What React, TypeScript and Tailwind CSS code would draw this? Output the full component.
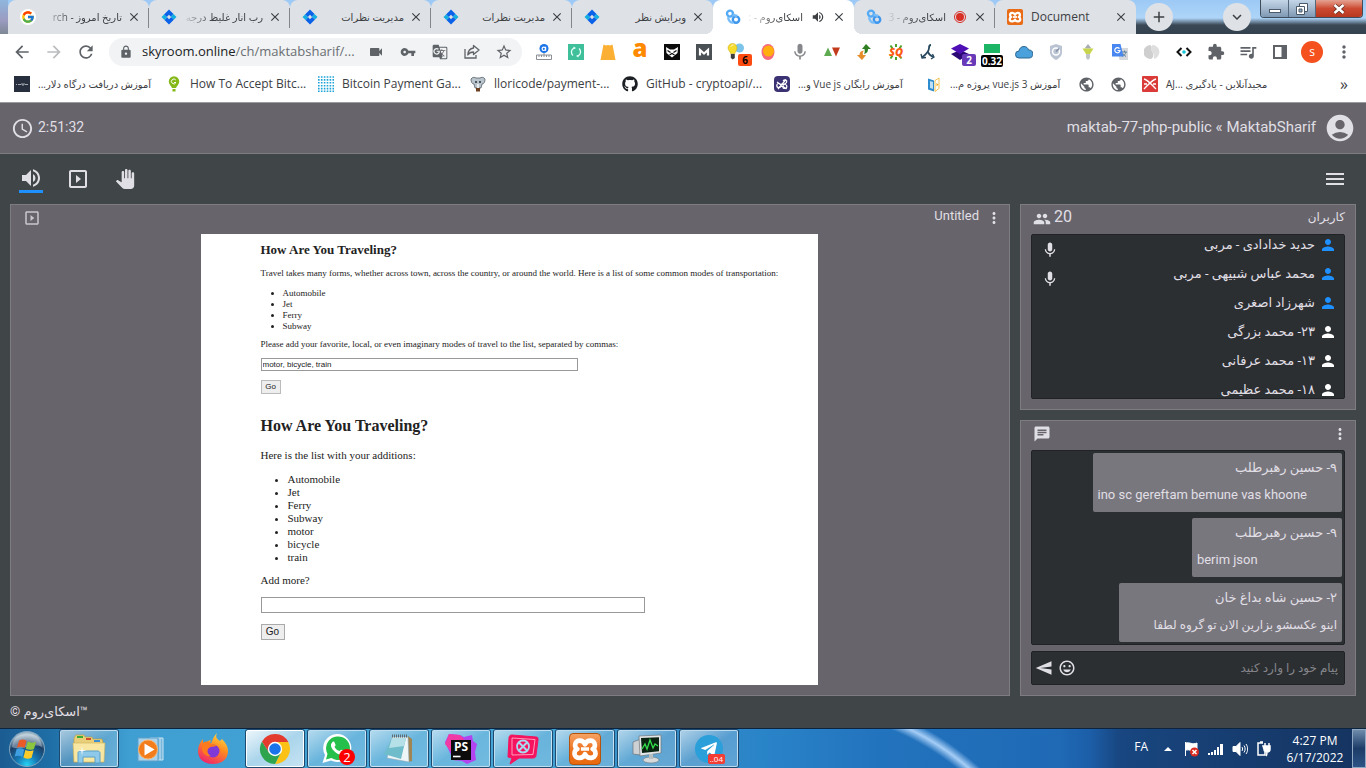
import type { ReactNode } from 'react';
import {
  MdAccountCircle, MdArrowBack, MdArrowForward, MdChat, MdClose, MdExtension, MdGTranslate, MdGroup,
  MdKeyboardArrowDown, MdLock, MdMenu, MdMoreVert, MdOutlineMood, MdOutlineSlideshow,
  MdPerson, MdPublic, MdQueueMusic, MdRefresh, MdSchedule, MdSend, MdStarBorder, MdVideocam, MdVolumeUp,
  MdVpnKey, MdAdd,
} from 'react-icons/md';
import { FaGithub, FaTelegramPlane } from 'react-icons/fa';
import { FcGoogle } from 'react-icons/fc';

/* ---------- small drawings ---------- */

const DiamondIcon = () => (
  <svg viewBox="0 0 16 16" className="size-4">
    <path d="M8 .5 12.500 5 9.800 7.700 8 5.800 5.800 8 3 5.400Z" fill="#0b62e8" />
    <path d="M8 15.500 3.500 11 6.200 8.300 8 10.200 10.200 8 13 10.600Z" fill="#0b62e8" />
    <path d="M3 5.400.5 8l3 3 2.700-2.700L5.800 8Z" fill="#12aee0" />
    <path d="M13 10.600 15.500 8l-3-3-2.700 2.700.4.3Z" fill="#12aee0" />
  </svg>
);

const SkyroomIcon = () => (
  <svg viewBox="0 0 16 16" className="size-4" fill="none" strokeWidth="2.400">
    <circle cx="5" cy="4.600" r="3" stroke="#54aaf5" />
    <circle cx="11" cy="10.600" r="3.200" stroke="#3e97ef" />
    <path d="M3 8.200C4 13 6 14 8.600 13.600M7.600 5.600 12 7" stroke="#78bdf8" />
  </svg>
);

const XamppTile = ({ big = false }: { big?: boolean }) => (
  <span
    className={
      big
        ? 'grid size-8 place-items-center rounded-sm border border-[#b4530c] bg-linear-to-b from-[#f5a263] via-[#ee7420] to-[#e8690f]'
        : 'grid size-4 place-items-center rounded-xs bg-[#e96b16]'
    }
  >
    <svg viewBox="4 6 24 21" className={big ? 'size-7' : 'size-3.5'} fill="none" stroke="#fff" strokeWidth="4" strokeLinejoin="round">
      <path d="M16 12.500C14 8 7.500 8.500 7.500 13c0 2 1 3 2 3.500-1.500.5-2.500 2-2.500 4 0 4.500 7 5 9 .5 2 4.500 9 4 9-.5 0-2-1-3.500-2.500-4 1-.5 2-1.500 2-3.500 0-4.500-6.500-5-8.500-.5Z" />
      <path d="M12.500 16.500h7" strokeWidth="3" />
    </svg>
  </span>
);

const MicIcon = ({ className }: { className: string }) => (
  <svg viewBox="0 0 24 24" className={className} fill="currentColor">
    <path d="M12 14c1.660 0 2.990-1.340 2.990-3L15 5c0-1.660-1.340-3-3-3S9 3.340 9 5v6c0 1.660 1.340 3 3 3zm5.300-3c0 3-2.540 5.100-5.300 5.100S6.700 14 6.700 11H5c0 3.410 2.720 6.230 6 6.720V21h2v-3.280c3.280-.48 6-3.300 6-6.720h-1.700z" />
  </svg>
);

const HandIcon = () => (
  <svg viewBox="0 0 24 24" className="size-5" fill="currentColor">
    <path d="M23 5.500V20c0 2.200-1.800 4-4 4h-7.300c-1.080 0-2.100-.43-2.850-1.190L1 14.830s1.260-1.230 1.300-1.250c.22-.19.49-.29.79-.29.22 0 .42.060.6.160.040.010 4.310 2.460 4.310 2.460V4c0-.83.67-1.500 1.500-1.500S11 3.170 11 4v7h1V1.500c0-.83.67-1.500 1.500-1.500S15 .67 15 1.500V11h1V2.500c0-.83.67-1.500 1.500-1.500s1.500.67 1.500 1.500V11h1V5.500c0-.83.67-1.500 1.500-1.500s1.500.67 1.500 1.500z" />
  </svg>
);

const ShareIcon = () => (
  <svg viewBox="0 0 16 16" className="size-4" fill="none" stroke="#5f6368" strokeWidth="1.300">
    <path d="M1 5v9h11v-3" />
    <path d="M9.500 1.500 15 6l-5.500 4.500V8C7 8 5 9 3.800 11 4 7 6 4.500 9.500 4Z" strokeLinejoin="round" />
  </svg>
);

const RulerIcon = () => (
  <svg viewBox="0 0 16 16" className="size-4">
    <circle cx="8" cy="4.500" r="4.500" fill="#1a73e8" />
    <circle cx="7.800" cy="4.800" r="1.700" fill="none" stroke="#fff" strokeWidth="1.200" />
    <path d="M9.600 2.800v4" stroke="#fff" strokeWidth="1.200" />
    <path d="M8 9v2M.5 11h15v4.500H.5ZM3 11v2M5.500 11v2M8 11v2M10.500 11v2M13 11v2" fill="none" stroke="#8a8f96" />
  </svg>
);

const ShieldIcon = () => (
  <svg viewBox="0 0 16 16" className="size-4">
    <path d="M8 0 14 2v6c0 4-3 6.500-6 8-3-1.500-6-4-6-8V2Z" fill="#b9c3d2" />
    <circle cx="8" cy="7.500" r="3.500" fill="none" stroke="#fff" strokeWidth="1.500" />
    <path d="M8 7.500 11 4.500" stroke="#7f8da3" strokeWidth="1.500" />
  </svg>
);

const Bulbs = () => (
  <svg viewBox="0 0 18 18" className="size-[18px]">
    <circle cx="12.500" cy="5" r="4.500" fill="#7cc4ea" />
    <path d="M1 5a4.500 4.500 0 0 1 9 0c0 2.500-2 3.500-2 5.500H3.500C3.500 8.500 1 7.500 1 5Z" fill="#f6dc2b" stroke="#c7a90e" strokeWidth=".5" />
    <path d="M3.800 11h4v4l-2 1.500-2-1.500Z" fill="#3c3c3c" />
    <path d="M4 3.500c.5-1 1.300-1.600 2.400-1.500" stroke="#fff" fill="none" />
  </svg>
);

const TranslateIcon = () => (
  <svg viewBox="0 0 16 16" className="size-4">
    <path d="M5 4h11v12H7.500Z" fill="#d5d8dc" />
    <path d="M10 8h5M12.500 6.500V8M14 8c-.5 2-2 3.500-3.500 4.500M11 9.500c.6 1.300 1.800 2.400 3 3" stroke="#5f7f9a" fill="none" />
    <path d="M0 0h8.500l3 12.500H0Z" fill="#4886f0" />
    <path d="M7.500 4.600A2.600 2.600 0 1 0 8 6.500H5.500" stroke="#fff" fill="none" strokeWidth="1.200" />
  </svg>
);

const Badge = ({ className, children }: { className: string; children: ReactNode }) => (
  <span className={`absolute rounded-xs px-1 text-[10px] leading-3 font-bold ${className}`}>{children}</span>
);

const extensions: { label: string; icon: ReactNode }[] = [
  { label: 'Ruler', icon: <RulerIcon /> },
  {
    label: 'Sync',
    icon: (
      <svg viewBox="0 0 16 16" className="size-4">
        <path d="M0 0h16v16H0Z" fill="#3fc09b" />
        <path d="M5 11.500A4.500 4.500 0 0 1 6 4M11 4.500A4.500 4.500 0 0 1 10 12" fill="none" stroke="#e9fff8" strokeWidth="1.300" />
        <path d="M5.500 2.500 8 4 5.500 5.500ZM10.500 10.500 8 12l2.500 1.500Z" fill="#e9fff8" />
      </svg>
    ),
  },
  {
    label: 'Bag',
    icon: (
      <svg viewBox="0 0 16 16" className="size-4">
        <path d="M3.500.5 6 1.500 8 1l2 .5 2.500-1L15.500 16H.5Z" fill="#fbb034" />
      </svg>
    ),
  },
  { label: 'Ahrefs', icon: <span className="pb-2 font-['Open_Sans',sans-serif] text-2xl leading-4 font-extrabold text-[#ff8a00]">a</span> },
  {
    label: 'Owl',
    icon: (
      <svg viewBox="0 0 16 16" className="size-4">
        <path d="M0 0h16v16H0Z" fill="#0b0b0b" />
        <path d="m2 3 4 2.500h4L14 3l-.5 6L8 13.500 2.500 9Z" fill="#fff" />
        <path d="m3.500 6.500 3 2M12.500 6.500l-3 2M5.500 11 8 9.500l2.500 1.500" stroke="#0b0b0b" strokeWidth="1.200" fill="none" />
      </svg>
    ),
  },
  {
    label: 'Moz',
    icon: (
      <svg viewBox="0 0 16 16" className="size-4">
        <path d="M0 0h16v16H0Z" fill="#4b5054" />
        <path d="M4 11.500V6l4 3.500L12 6v5.500" fill="none" stroke="#fff" strokeWidth="2.200" />
      </svg>
    ),
  },
  { label: 'Bulbs', icon: <><Bulbs /><Badge className="right-0 bottom-0 bg-[#ff4d12] text-black">6</Badge></> },
  {
    label: 'Sun',
    icon: (
      <svg viewBox="0 0 16 16" className="size-4">
        <ellipse cx="8" cy="8" rx="6.500" ry="8" fill="#f7677d" />
        <circle cx="8.500" cy="7" r="5.500" fill="#ffae0d" />
      </svg>
    ),
  },
  { label: 'Voice', icon: <MicIcon className="size-5 text-[#85878a]" /> },
  {
    label: 'Arrows',
    icon: (
      <svg viewBox="0 0 16 16" className="size-4">
        <path d="M0 12 4 3.500 8 12Z" fill="#5daa50" />
        <path d="M8 3.500h8L12 12.500Z" fill="#c33a1d" />
      </svg>
    ),
  },
  {
    label: 'Swap',
    icon: (
      <svg viewBox="0 0 16 16" className="size-4">
        <path d="M10 0 15 5h-3c0 3-1 4-4 5 1-2 .8-3 .5-5H6Z" fill="#2f7f22" />
        <path d="M6 16 1 11h2.500C3.500 8 5 7 8 6.500 6.500 8 6.500 9.500 7 11h3Z" fill="#e58b28" />
      </svg>
    ),
  },
  {
    label: 'SEOquake',
    icon: (
      <span className="relative grid size-4 place-items-center">
        <svg viewBox="0 0 16 16" className="absolute size-4">
          <path d="M8 0v3M8 13v3M2.500 1.500l2 3M13.500 1.500l-2 3M2.500 14.500l2-3M13.500 14.500l-2-3" stroke="#4fa329" strokeWidth="2" />
        </svg>
        <span className="relative text-[11px] leading-3 font-extrabold text-[#ff5a10] italic">SQ</span>
      </span>
    ),
  },
  {
    label: 'Branch',
    icon: (
      <svg viewBox="0 0 16 16" className="size-4" fill="none" stroke="#27485e" strokeWidth="1.800">
        <path d="M11 1c-1 0-2 1-2 3 0 4-3 6-7 9.500M8 8c1 3 3 4 5.500 5" />
        <path d="m1 10 1 4 4-.5M11 15l3-2-1.500-3" strokeWidth="1.300" />
      </svg>
    ),
  },
  {
    label: 'Layers',
    icon: (
      <>
        <svg viewBox="0 0 18 16" className="h-4 w-[18px]">
          <path d="m9 6 9 4-9 6-9-6Z" fill="#2b0a75" />
          <path d="m9 0 9 4.500L9 10 0 4.500Z" fill="#4e0fb5" />
        </svg>
        <Badge className="right-0 bottom-0 bg-[#6839b8] text-white">2</Badge>
      </>
    ),
  },
  {
    label: 'Load time',
    icon: (
      <span className="flex flex-col items-center pt-1.5">
        <span className="h-[9px] w-4 bg-[#1cb566]" />
        <span className="mt-0.5 rounded-xs bg-black px-px text-[10px] leading-3 font-bold text-white">0.32</span>
      </span>
    ),
  },
  {
    label: 'Cloud',
    icon: (
      <svg viewBox="0 0 18 14" className="h-3.5 w-[18px]">
        <path d="M4 13a3.500 3.500 0 0 1 0-7c.4-2.500 2-4.500 5-4.500 2.500 0 4 1.500 4.500 3.500A4 4 0 0 1 14 13Z" fill="#4ba1dc" stroke="#2d6790" />
      </svg>
    ),
  },
  { label: 'Shield', icon: <ShieldIcon /> },
  {
    label: 'Funnel',
    icon: (
      <svg viewBox="0 0 16 16" className="size-4">
        <path d="M8 0 11.500 4.500h-7Z" fill="#a8adb2" />
        <path d="M2.500 4.500h11L10 10H6Z" fill="#c8d54a" />
        <path d="M6 10h4v4l-2 2-2-2Z" fill="#c1c5c8" />
      </svg>
    ),
  },
  { label: 'Translate', icon: <TranslateIcon /> },
  {
    label: 'Circle',
    icon: (
      <svg viewBox="0 0 16 16" className="size-4">
        <path d="M6 1c2 0 0 3 2 6s2 6-1 8A7 7 0 0 1 6 1Z" fill="#cfcfcf" />
        <path d="M9 1c6 1 8 7 5 11-2 3-5 4-4 1 1-4-3-5-3-9 0-2 1-3 2-3Z" fill="#dedede" />
      </svg>
    ),
  },
  {
    label: 'Code',
    icon: (
      <svg viewBox="0 0 16 12" className="h-3 w-4" fill="none" stroke="#111" strokeWidth="2">
        <path d="M5.500 2 1.500 6l4 4M10.500 2l4 4-4 4" />
        <circle cx="8" cy="6" r="1.800" fill="#14c6d8" stroke="none" />
      </svg>
    ),
  },
  { label: 'Extensions', icon: <MdExtension className="size-[18px] text-[#5f6368]" /> },
  { label: 'Media', icon: <MdQueueMusic className="size-5 text-[#5f6368]" /> },
  {
    label: 'Side panel',
    icon: (
      <svg viewBox="0 0 14 14" className="size-3.5">
        <path d="M1 1h12v12H1Z" fill="#fff" stroke="#5f6368" strokeWidth="2" />
        <path d="M8.500 1H13v12H8.500Z" fill="#5f6368" />
      </svg>
    ),
  },
  { label: 'Profile', icon: <span className="grid size-[22px] place-items-center rounded-full bg-[#f4511e] text-xs text-white">s</span> },
  { label: 'Menu', icon: <MdMoreVert className="size-5 text-[#5f6368]" /> },
];

/* ---------- browser ---------- */

type TabData = { title: string; icon: ReactNode; rtl?: boolean; active?: boolean; audio?: 'sound' | 'rec'; fade?: boolean; divider?: boolean };

const tabs: TabData[] = [
  {
    title: 'تاریخ امروز - rch',
    icon: <span className="grid size-4 place-items-center rounded-full bg-white"><FcGoogle className="size-3.5" /></span>,
    rtl: true,
    fade: true,
    divider: true,
  },
  { title: 'رب انار غلیظ درجه', icon: <DiamondIcon />, rtl: true, fade: true, divider: true },
  { title: 'مدیریت نظرات', icon: <DiamondIcon />, rtl: true, divider: true },
  { title: 'مدیریت نظرات', icon: <DiamondIcon />, rtl: true, divider: true },
  { title: 'ویرایش نظر', icon: <DiamondIcon />, rtl: true },
  { title: 'اسکای‌روم - :', icon: <SkyroomIcon />, rtl: true, active: true, audio: 'sound', fade: true },
  { title: 'اسکای‌روم - 3', icon: <SkyroomIcon />, rtl: true, audio: 'rec', fade: true, divider: true },
  { title: 'Document', icon: <XamppTile /> },
];

const Tab = ({ title, icon, rtl, active, audio, fade, divider }: TabData) => (
  <div
    className={`relative flex h-full w-[141px] items-center rounded-t-lg pr-[7px] pl-3 ${
      active
        ? 'z-10 bg-white before:absolute before:bottom-0 before:-left-2 before:size-2 before:bg-[radial-gradient(circle_at_0_0,transparent_8px,white_8px)] after:absolute after:-right-2 after:bottom-0 after:size-2 after:bg-[radial-gradient(circle_at_100%_0,transparent_8px,white_8px)]'
        : 'bg-[#dee1e6]'
    }`}
  >
    <span className="grid size-4 shrink-0 place-items-center">{icon}</span>
    <span
      dir={rtl ? 'rtl' : 'ltr'}
      className={`h-5 min-w-0 flex-1 whitespace-nowrap leading-5 text-[#3c4043] ${
        rtl ? 'ml-1 text-[10px]' : 'ml-2 text-xs'
      } ${fade ? 'mask-[linear-gradient(to_right,transparent,black_32px)]' : ''}`}
    >
      {title}
    </span>
    {audio === 'sound' && <MdVolumeUp className="ml-2 size-3.5 shrink-0 text-[#3c4043]" />}
    {audio === 'rec' && (
      <span className="ml-2 grid size-3 shrink-0 place-items-center rounded-full border border-[#d93025]">
        <span className="size-2 rounded-full bg-[#d93025]" />
      </span>
    )}
    <button aria-label="Close tab" className={`grid size-4 shrink-0 place-items-center text-[#3c4043] ${audio ? 'ml-1.5' : 'ml-1'}`}>
      <MdClose className="size-3.5" />
    </button>
    {divider && <span className="absolute top-2 right-0 h-5 w-px bg-[#80868b]" />}
  </div>
);

const WindowButtons = () => (
  <div className="mr-[3px] ml-[9px] flex h-[18px] self-start overflow-hidden rounded-b border border-t-0 border-[#3d4d5e] text-white">
    <button aria-label="Minimize" className="grid w-7 place-items-center border-r border-[#55697e] bg-linear-to-b from-[#c4d6e8] via-[#a3b8cd] to-[#7f98b3]">
      <span className="mt-1 h-1 w-3 border border-[#4a5a6b] bg-white" />
    </button>
    <button aria-label="Restore" className="grid w-[27px] place-items-center border-r border-[#55697e] bg-linear-to-b from-[#c4d6e8] via-[#a3b8cd] to-[#7f98b3]">
      <svg viewBox="0 0 12 12" className="size-3" fill="none" stroke="#4a5a6b">
        <path d="M3.500.5h8v8h-8Z" fill="#fff" />
        <path d="M.5 3.500h8v8h-8Z" fill="#fff" />
        <path d="M3 6h3v3H3Z" fill="#8ea5bd" />
      </svg>
    </button>
    <button aria-label="Close" className="grid w-[46px] place-items-center bg-linear-to-b from-[#e5a292] via-[#cb4a31] to-[#b8371f]">
      <svg viewBox="0 0 12 10" className="h-2.5 w-3">
        <path d="m1.500 1 9 8M10.500 1l-9 8" stroke="#5b2a22" strokeWidth="4" />
        <path d="m1.500 1 9 8M10.500 1l-9 8" stroke="#fff" strokeWidth="2.600" />
      </svg>
    </button>
  </div>
);

const TabStrip = () => (
  <div className="flex h-[34px] items-center bg-[linear-gradient(to_bottom,#9cc9f5_0px,#aed5f8_18px,#3a4855_25px,#34414e_34px)]">
    <div className="h-full w-2 shrink-0 bg-[linear-gradient(to_bottom,#8fb6dd,#9b9bc0_60%,#7e8794)]" />
    <div className="flex h-full bg-[linear-gradient(to_bottom,#9cc9f5_8px,#dee1e6_8px)]">
      {tabs.map((tab, i) => (
        <Tab key={i} {...tab} />
      ))}
    </div>
    <button aria-label="New tab" className="ml-[9px] grid size-7 shrink-0 place-items-center rounded-full bg-[#dee1e6] text-[#3c4043]">
      <MdAdd className="size-[18px]" />
    </button>
    <button aria-label="Search tabs" className="ml-auto grid size-7 shrink-0 place-items-center rounded-full bg-[#dee1e6] text-[#3c4043]">
      <MdKeyboardArrowDown className="size-[18px]" />
    </button>
    <WindowButtons />
  </div>
);

const IconCell = ({ label, children }: { label: string; children: ReactNode }) => (
  <button aria-label={label} className="relative grid h-7 w-8 shrink-0 place-items-center text-[#5f6368]">
    {children}
  </button>
);

const AddressBar = () => (
  <div className="flex h-9 items-center bg-white px-1.5">
    <IconCell label="Back"><MdArrowBack className="size-5" /></IconCell>
    <IconCell label="Forward"><MdArrowForward className="size-5 text-[#babcbe]" /></IconCell>
    <IconCell label="Reload"><MdRefresh className="size-5" /></IconCell>
    <div className="mr-1.5 ml-[7px] flex h-7 min-w-0 flex-1 items-center rounded-full bg-[#f1f3f4] pr-0.5 pl-2.5">
      <MdLock className="size-3.5 shrink-0 text-[#5f6368]" />
      <p className="ml-[9px] min-w-0 flex-1 text-[13px] whitespace-nowrap text-[#6a6e73]">
        <span className="text-[#202124]">skyroom.online</span>/ch/maktabsharif/...
      </p>
      <IconCell label="Camera"><MdVideocam className="size-4" /></IconCell>
      <IconCell label="Passwords"><MdVpnKey className="size-4" /></IconCell>
      <IconCell label="Translate page"><MdGTranslate className="size-4" /></IconCell>
      <IconCell label="Share"><ShareIcon /></IconCell>
      <IconCell label="Bookmark"><MdStarBorder className="size-[18px]" /></IconCell>
    </div>
    {extensions.map((e) => (
      <IconCell key={e.label} label={e.label}>{e.icon}</IconCell>
    ))}
  </div>
);

const bookmarks: { text: string; rtl?: boolean; icon: ReactNode }[] = [
  {
    text: 'آموزش دریافت درگاه دلار...',
    rtl: true,
    icon: (
      <svg viewBox="0 0 16 16" className="size-4">
        <path d="M0 0h16v16H0Z" fill="#272e3d" />
        <path d="M2 8.500h1M4 8.500h3M8 7v2h2V7M11 8.500h3" stroke="#c7cad1" strokeWidth=".8" fill="none" />
      </svg>
    ),
  },
  {
    text: 'How To Accept Bitc...',
    icon: (
      <svg viewBox="0 0 16 16" className="size-4">
        <circle cx="8" cy="5.500" r="5.200" fill="#83b817" />
        <path d="M4.500 9h7L10 12H6ZM6.500 13h3v2.500h-3Z" fill="#83b817" />
        <path d="M9.800 4A2.400 2.400 0 1 0 10 6.500H8" stroke="#fff" fill="none" />
      </svg>
    ),
  },
  {
    text: 'Bitcoin Payment Ga...',
    icon: (
      <svg viewBox="0 0 16 16" className="size-4">
        <g stroke="#1ba2d8" strokeWidth="1.600" strokeDasharray="1.600 1.300">
          <path d="M0 1h16M0 3.900h16M0 6.800h16M0 9.700h16M0 12.600h16M0 15.200h16" />
        </g>
      </svg>
    ),
  },
  {
    text: 'lloricode/payment-...',
    icon: (
      <svg viewBox="0 0 16 16" className="size-4">
        <path d="M1 3c1-2 4-2 5-1h4c1-1 4-1 5 1 0 3-1 5-3 5l-1 4H5L4 8C2 8 1 6 1 3Z" fill="#b9c4cc" stroke="#56606a" strokeWidth=".8" />
        <circle cx="6" cy="6" r="1" fill="#25303a" />
        <circle cx="10" cy="6" r="1" fill="#25303a" />
        <path d="M6 12h4v3.500H6Z" fill="#6b3f22" />
        <path d="M7 8h2v4H7Z" fill="#e6ebee" />
      </svg>
    ),
  },
  { text: 'GitHub - cryptoapi/...', icon: <FaGithub className="size-4 text-[#1b1f23]" /> },
  {
    text: 'آموزش رایگان Vue js و...',
    rtl: true,
    icon: (
      <svg viewBox="0 0 16 16" className="size-4" fill="none" stroke="#fff" strokeWidth="1.200">
        <rect width="16" height="16" rx="4" fill="#3b3274" stroke="none" />
        <circle cx="4.800" cy="9.500" r="2" />
        <circle cx="10.800" cy="10.500" r="2" />
        <path d="M3 6 12.500 13M4 13 12 3.500M9 5c2-2.500 4.500-.5 3.500 1.500S9 8.500 7 8" />
      </svg>
    ),
  },
  {
    text: 'آموزش vue.js 3 پروژه م...',
    rtl: true,
    icon: (
      <svg viewBox="0 0 16 16" className="size-4">
        <path d="M2 2.500 8 4.500v11l-6-2Z" fill="#2d8ccf" />
        <path d="m4 5 3 1v7l-3-1Z" fill="#bde0f5" />
        <path d="M9 4.500 13 2v10.500l-4 3Z" fill="#fff" stroke="#f3c14f" />
        <path d="m10.500 7 2 1.500-2 2Z" fill="#f3a91f" />
      </svg>
    ),
  },
];

const Bookmark = ({ text, rtl, icon, className }: { text: string; rtl?: boolean; icon: ReactNode; className: string }) => (
  <a href="#" className={`flex items-center gap-2 ${className}`}>
    <span className="shrink-0">{icon}</span>
    <span dir={rtl ? 'rtl' : 'ltr'} className={`whitespace-nowrap ${rtl ? 'text-[10px]' : 'text-xs'}`}>{text}</span>
  </a>
);

const BookmarksBar = () => (
  <nav className="flex h-[33px] items-center border-b border-[#9b9ca0] bg-white pb-1 pl-3.5 text-[#3c4043]">
    {bookmarks.map((b) => (
      <Bookmark key={b.text} {...b} className="w-[152px]" />
    ))}
    <a href="#" aria-label="Site" className="w-8"><MdPublic className="size-[17px] text-[#5f6368]" /></a>
    <a href="#" aria-label="Site" className="w-8"><MdPublic className="size-[17px] text-[#5f6368]" /></a>
    <Bookmark
      className=""
      rtl
      text="مجیدآنلاین - یادگیری ...AJ"
      icon={
        <svg viewBox="0 0 16 16" className="size-4">
          <rect width="16" height="16" rx="1" fill="#da3b38" />
          <path d="M2 3c4 1 8 6 12 10M14 3c-4 1-8 6-12 10M2 8h3M11 8h3" stroke="#fff" strokeWidth="1.300" fill="none" />
        </svg>
      }
    />
    <button aria-label="More bookmarks" className="mr-[18px] ml-auto text-base leading-5">»</button>
  </nav>
);

/* ---------- meeting page ---------- */

const MeetingHeader = () => (
  <header className="flex h-[51px] items-center justify-between border-b border-[#7d7c81] bg-[#67656b] pr-3 pb-0.5 pl-[11px] text-[#e0dfe5]">
    <div className="flex items-center gap-1">
      <MdSchedule className="mt-0.5 size-[23px]" />
      <time className="text-sm">2:51:32</time>
    </div>
    <div className="flex items-center gap-2">
      <h1 className="text-[15px]">maktab-77-php-public « MaktabSharif</h1>
      <MdAccountCircle className="mt-0.5 -mr-0.5 size-8" />
    </div>
  </header>
);

const Tools = () => (
  <div className="flex h-[50px] items-center justify-between px-[19px] text-[#e0dfe5]">
    <div className="flex items-center gap-[23px]">
      <button aria-label="Speaker" className="flex h-7 w-6 flex-col items-center justify-center border-b-[3px] border-[#1e90ff]">
        <MdVolumeUp className="size-6" />
      </button>
      <button aria-label="Broadcast" className="grid w-6 place-items-center"><MdOutlineSlideshow className="size-6" /></button>
      <button aria-label="Raise hand" className="grid w-6 place-items-center"><HandIcon /></button>
    </div>
    <button aria-label="Open menu"><MdMenu className="size-6" /></button>
  </div>
);

const modes = ['Automobile', 'Jet', 'Ferry', 'Subway'];
const panel = 'flex flex-col border border-[#7d7c81] bg-[#67656b] text-[#e0dfe5]';

const Slide = () => (
  <div className="h-full w-[617px] max-w-full overflow-hidden bg-white pl-[60px] font-['Liberation_Serif',serif] text-[#222]">
    <h2 className="pt-1.5 text-[13px] leading-5 font-bold">How Are You Traveling?</h2>
    <p className="mt-[7px] text-[9px] leading-3 whitespace-nowrap">
      Travel takes many forms, whether across town, across the country, or around the world. Here is a list of some common modes of transportation:
    </p>
    <ul className="mt-[9px] list-disc pl-[22px] text-[9px] leading-[11px]">
      {modes.map((m) => <li key={m}>{m}</li>)}
    </ul>
    <label htmlFor="modes" className="mt-1.5 block text-[9px] leading-3">
      Please add your favorite, local, or even imaginary modes of travel to the list, separated by commas:
    </label>
    <input
      id="modes"
      defaultValue="motor, bicycle, train"
      className="mt-2 block h-[13px] w-[317px] border border-[#999] px-px font-['Liberation_Sans',sans-serif] text-[8px]"
    />
    <button className="mt-[9px] block h-3.5 w-5 border border-[#bbb] bg-[#eee] font-['Liberation_Sans',sans-serif] text-[8px] leading-3">Go</button>
    <h2 className="mt-[22px] text-base leading-5 font-bold">How Are You Traveling?</h2>
    <p className="mt-[11px] text-[11px] leading-4">Here is the list with your additions:</p>
    <ul className="mt-2.5 list-disc pl-[27px] text-[11px] leading-[13px]">
      {[...modes, 'motor', 'bicycle', 'train'].map((m) => <li key={m}>{m}</li>)}
    </ul>
    <label htmlFor="more" className="mt-2 block text-[11px] leading-4">Add more?</label>
    <input id="more" className="mt-[9px] block h-4 w-[384px] border border-[#999] px-1 text-[11px]" />
    <button className="mt-[11px] block h-4 w-6 border border-[#aaa] bg-[#eee] font-['Liberation_Sans',sans-serif] text-[10px] leading-3">Go</button>
  </div>
);

const Stage = () => (
  <section aria-label="Presentation" className={`${panel} min-w-0 flex-1 pr-0.5 pb-2.5`}>
    <div className="flex h-[29px] shrink-0 items-center justify-between pr-1 pb-[3px] pl-3">
      <MdOutlineSlideshow className="size-[18px] text-[#c9c8cd]" />
      <div className="flex items-center gap-1.5 text-[13px] leading-4">
        <h2 className="pb-1">Untitled</h2>
        <button aria-label="Presentation options"><MdMoreVert className="size-[18px]" /></button>
      </div>
    </div>
    <div className="flex min-h-0 flex-1 justify-center"><Slide /></div>
  </section>
);

const users = [
  { name: 'حدید خدادادی - مربی', host: true, mic: true },
  { name: 'محمد عباس شبیهی - مربی', host: true, mic: true },
  { name: 'شهرزاد اصغری', host: true },
  { name: '۲۳- محمد بزرگی' },
  { name: '۱۳- محمد عرفانی' },
  { name: '۱۸- محمد عظیمی' },
];

const Users = () => (
  <section aria-label="کاربران" className={`${panel} h-[206px] shrink-0 px-2.5 pb-2.5`}>
    <div className="flex h-[29px] shrink-0 items-center justify-between pb-1.5">
      <div className="flex items-center gap-[3px] pl-0.5 text-base">
        <MdGroup className="mt-1 size-[18px]" />
        20
      </div>
      <h2 className="text-xs">کاربران</h2>
    </div>
    <ul dir="rtl" className="min-h-0 flex-1 overflow-hidden rounded-xs border border-[#1f2325] bg-[#2b2f32] pr-[7px] pl-[9px]">
      {users.map((u) => (
        <li key={u.name} className="flex h-[29px] items-start gap-1">
          <MdPerson className={`mt-px size-[18px] ${u.host ? 'text-[#1e90ff]' : 'text-white'}`} />
          <span className="flex-1 text-[13px] leading-5">{u.name}</span>
          {u.mic && <MicIcon className="mt-1.5 size-[18px]" />}
        </li>
      ))}
    </ul>
  </section>
);

const messages = [
  { from: '۹- حسین رهبرطلب', text: 'ino sc gereftam bemune vas khoone', rtl: false },
  { from: '۹- حسین رهبرطلب', text: 'berim json', rtl: false },
  { from: '۲- حسین شاه بداغ خان', text: 'اینو عکسشو بزارین الان تو گروه لطفا', rtl: true },
];

const Chat = () => (
  <section aria-label="گفتگو" className={`${panel} min-h-0 flex-1 px-2.5 pb-2.5`}>
    <div className="flex h-[29px] shrink-0 items-center justify-between pb-1">
      <MdChat className="ml-0.5 size-[18px]" />
      <button aria-label="Chat options" className="-mr-1"><MdMoreVert className="size-[18px]" /></button>
    </div>
    <ul dir="rtl" className="flex min-h-0 flex-1 flex-col items-start gap-1.5 overflow-hidden rounded-xs border border-[#1f2325] bg-[#2b2f32] p-0.5">
      {messages.map((m, i) => (
        <li key={i} className="h-[59px] shrink-0 rounded-xs bg-[#79777e] px-[5px] pt-1.5">
          <p className="pe-[38px] text-[13px] leading-[18px]">{m.from}</p>
          <p dir={m.rtl ? 'rtl' : 'ltr'} className={`mt-2 pe-[30px] leading-5 ${m.rtl ? 'text-xs' : 'text-[13px]'}`}>{m.text}</p>
        </li>
      ))}
    </ul>
    <form className="mt-1.5 flex h-[34px] shrink-0 items-center rounded-xs border border-[#1f2325] bg-[#2b2f32] pl-0.5">
      <button type="button" aria-label="ارسال" className="px-px"><MdSend className="size-[18px] rotate-180" /></button>
      <button type="button" aria-label="Emoji" className="ml-1"><MdOutlineMood className="size-[18px]" /></button>
      <input
        dir="rtl"
        aria-label="پیام"
        placeholder="پیام خود را وارد کنید"
        className="h-full min-w-0 flex-1 bg-transparent px-1.5 text-xs outline-none placeholder:text-[#85858a]"
      />
    </form>
  </section>
);

/* ---------- desktop taskbar ---------- */

const StartOrb = () => (
  <svg viewBox="0 0 38 38" className="size-[38px]">
    <defs>
      <radialGradient id="orb" cx="50%" cy="95%" r="85%">
        <stop offset="0" stopColor="#27d3f5" />
        <stop offset=".35" stopColor="#1679b5" />
        <stop offset=".75" stopColor="#1b3f66" />
        <stop offset="1" stopColor="#9fb7c8" />
      </radialGradient>
    </defs>
    <circle cx="19" cy="19" r="17.500" fill="url(#orb)" stroke="#7fa5bd" />
    <path d="M4 17C5 7 12 3.500 19 3.500S33 7 34 17C24 12 14 22 4 17Z" fill="#fff" opacity=".35" />
    <path d="M11 10.500c3-1.500 5-1.300 7.500.3L16.600 18c-2.600-1.500-4.800-1.500-7.600-.3Z" fill="#ea5a28" />
    <path d="M19.700 11.500c2.800 1.500 5 1.500 8.300.2L26 19c-3 1.300-5.500 1-8.200-.3Z" fill="#8cc63e" />
    <path d="M8.600 19c2.900-1.200 5-1 7.600.4L14.300 27c-2.500-1.600-4.800-1.500-7.600-.4Z" fill="#3f9fe0" />
    <path d="M17.400 20c2.700 1.300 5.200 1.500 8.200.3l-2 7.500c-3 1.300-5.500 1-8.200-.4Z" fill="#fbcb2a" />
  </svg>
);

const Explorer = () => (
  <svg viewBox="0 0 34 30" className="h-[30px] w-[34px]">
    <path d="M2 4 4 1h8l1 2h7l1 2h9l1 3v20H2Z" fill="#e9cf7a" stroke="#b79a42" strokeWidth=".6" />
    <path d="M5 2h6v2H5Z" fill="#3aa935" />
    <path d="M14 4h5v2h-5Z" fill="#d24b2c" />
    <path d="M22 6h6v2h-6Z" fill="#3c8fd0" />
    <path d="M1 9h32l-1 19H2Z" fill="#f7e7a2" stroke="#cdb25b" strokeWidth=".6" />
    <path d="M6 29V19c0-1 1-2 2-2h18c1 0 2 1 2 2v10h-5v-6H11v6Z" fill="#8fc9ea" stroke="#5b9fc9" />
    <path d="m10 12 .6 4 4 .6-4 .6-.6 4-.6-4-4-.6 4-.6Z" fill="#fff" />
  </svg>
);

const MediaPlayer = () => (
  <svg viewBox="0 0 30 28" className="h-7 w-[30px]">
    <path d="M14 3h13v22H14Z" fill="#76b6dc" stroke="#c9e5f5" />
    <path d="M24 3v22" stroke="#c9e5f5" />
    <path d="M2 3h20v23H2Z" fill="#a9d3ec" stroke="#5e9fc9" />
    <circle cx="12" cy="14.500" r="9.500" fill="#f27d1a" stroke="#fbb56d" />
    <path d="m8.500 8.500 10 6-10 6Z" fill="#fff" />
  </svg>
);

const Firefox = () => (
  <svg viewBox="0 0 32 32" className="size-8">
    <defs>
      <linearGradient id="fox" x1=".8" y1="0" x2=".3" y2="1">
        <stop offset="0" stopColor="#ffe14a" />
        <stop offset=".45" stopColor="#ff8a1f" />
        <stop offset="1" stopColor="#f0246c" />
      </linearGradient>
    </defs>
    <path d="M20 0c-2 4 0 6 3 8l2-2c4 4 6 8 6 12 0 8-6 13-15 13S1 26 1 18c0-5 2-9 5-12v4l4-1c1-1 2-2 4-2-1 2-1 3 0 4 2-6 3-8 6-11Z" fill="url(#fox)" />
    <circle cx="16" cy="18" r="6.500" fill="#8039d6" />
    <path d="M6 10c3-2 6-2 8 1 3 0 5 1 5 2-2 1-5 0-7 2-3 2-1 7 2 8-5 1-9-3-9-8 0-2 0-4 1-5Z" fill="#ff7a1c" />
  </svg>
);

const Chrome = () => (
  <svg viewBox="0 0 32 32" className="size-8">
    <path d="M16 9h13.300A15 15 0 0 1 16 31l6-11.500Z" fill="#fbc116" />
    <path d="M10 19.500 3 8.500A15 15 0 0 0 16 31l6-11.500Z" fill="#2ea44f" />
    <path d="M16 9h13.300A15 15 0 0 0 3 8.500l7 11Z" fill="#e33b2e" />
    <circle cx="16" cy="16" r="7.200" fill="#fff" />
    <circle cx="16" cy="16" r="5.800" fill="#1a73e8" />
  </svg>
);

const Notepad = () => (
  <svg viewBox="0 0 32 32" className="size-8">
    <path d="m25 3 4 3v22l-4 1Z" fill="#a08452" />
    <path d="M9 4h16l1 25L4 25Z" fill="#eef5f7" stroke="#8faab5" strokeWidth=".6" />
    <path d="M9 5h14l-5 21L1 21Z" fill="#6fbccb" />
    <path d="M9 5h14l-2 8-15 2Z" fill="#b6e0e8" />
    <path d="M9 3h16" stroke="#5c6a70" strokeWidth="3" strokeDasharray="1 1" />
  </svg>
);

const PhpStorm = () => (
  <span className="relative grid size-8 place-items-center">
    <svg viewBox="0 0 32 32" className="absolute size-8">
      <path d="M4 1 15 2l4 2 8-2 1 6 4 3-2 8 1 8-9 4-5-3-9-1-3-7-5-11Z" fill="#b345f1" />
      <path d="M4 1 15 2l4 4-8 22-3-7L0 11Z" fill="#f23aa5" />
      <path d="M6 7h20v20H6Z" fill="#0c0c0c" />
      <path d="M8 23.500h7.500" stroke="#fff" strokeWidth="1.600" />
    </svg>
    <span className="relative pb-1 text-xs leading-3 font-bold text-white">PS</span>
  </span>
);

const PinkBubble = () => (
  <svg viewBox="0 0 32 32" className="size-8" fill="none" stroke="#f5135f">
    <path d="M5 2 29 4c2 0 2 1 2 3l-2 15c0 2-1 3-3 3H12L3 31l2-6-4-1 1-19c0-2 1-3 3-3Z" fill="#f5135f" strokeWidth="1" />
    <path d="m5 5 23 1.500-2 15L5 22Z" stroke="#ffc0d4" strokeWidth=".8" />
    <circle cx="16" cy="13.500" r="6" stroke="#a9d8f0" strokeWidth="1.800" />
    <path d="m12 9.500 8 8M20 9.500l-8 8" stroke="#a9d8f0" strokeWidth="2" />
  </svg>
);

const Monitor = () => (
  <svg viewBox="0 0 32 32" className="size-8">
    <path d="m2 9 8-3v16l-8-1Z" fill="#cdd1d4" stroke="#6e7478" strokeWidth=".7" />
    <path d="m8 3 22-1v18l-21 3Z" fill="#e3e6e8" stroke="#6e7478" strokeWidth=".7" />
    <path d="m10 5 18-.8v14L11 20Z" fill="#0b2412" />
    <path d="m11 16 3-5 2 5 3-9 3 8 2-4 3 2" stroke="#35e04d" fill="none" strokeWidth="1.300" />
    <ellipse cx="20" cy="27" rx="8" ry="3" fill="#d7dadc" stroke="#7c8286" strokeWidth=".7" />
    <path d="M18 21h4v5h-4Z" fill="#b9bec1" />
  </svg>
);

const apps: { label: string; kind: 'idle' | 'open' | 'focus'; icon: ReactNode }[] = [
  { label: 'Explorer', kind: 'open', icon: <Explorer /> },
  { label: 'Media Player', kind: 'idle', icon: <MediaPlayer /> },
  { label: 'Firefox', kind: 'idle', icon: <Firefox /> },
  { label: 'Chrome', kind: 'focus', icon: <Chrome /> },
  {
    label: 'WhatsApp',
    kind: 'open',
    icon: (
      <span className="relative grid size-8 place-items-center">
        <svg viewBox="0 0 32 32" className="absolute size-8">
          <path d="M16 1a14 14 0 1 1-6 26.500L1.500 30 4 22A14 14 0 0 1 16 1Z" fill="#fff" />
          <path d="M16 3.500A11.800 11.800 0 1 1 10.500 25L5 26.500 6.500 21A11.800 11.800 0 0 1 16 3.500Z" fill="#25c04c" />
          <path d="M11.500 9c1-.8 1.800-.5 2.300 1l.8 2c.2.700-1.200 1.600-1 2 1 2 2.400 3.200 4.600 4 .5.2 1.400-1.500 2-1.300l2.600 1.300c1 .6.3 2.500-.8 3.200-4 2.500-13-5-12-9.700.2-1 .7-1.800 1.500-2.500Z" fill="#fff" />
        </svg>
        <span className="absolute -right-0.5 bottom-0 grid size-4 place-items-center rounded-full bg-[#fe0000] text-[13px] leading-4 text-white">2</span>
      </span>
    ),
  },
  { label: 'Notepad', kind: 'open', icon: <Notepad /> },
  { label: 'PhpStorm', kind: 'open', icon: <PhpStorm /> },
  { label: 'Chat', kind: 'open', icon: <PinkBubble /> },
  { label: 'XAMPP', kind: 'open', icon: <XamppTile big /> },
  { label: 'Monitor', kind: 'open', icon: <Monitor /> },
  {
    label: 'Telegram',
    kind: 'open',
    icon: (
      <span className="relative grid size-7 place-items-center rounded-full bg-[#2a9fd9] text-white">
        <FaTelegramPlane className="size-[18px]" />
        <span className="absolute -right-0.5 -bottom-px rounded-xs bg-[#f23c34] px-0.5 text-[8px] leading-[10px]">..04</span>
      </span>
    ),
  },
];

const appStyles = {
  idle: 'border-transparent',
  open: 'border-[#d3e8f5]/80 bg-linear-to-br from-white/60 via-white/20 to-white/25 shadow-[0_0_0_1px_#1d4a6e]',
  focus: 'border-white bg-linear-to-br from-white/90 via-white/55 to-white/70 shadow-[0_0_0_1px_#1d4a6e]',
};

const Taskbar = () => (
  <footer className="flex h-10 shrink-0 items-stretch border-t border-[#0c2440] font-['Open_Sans','DejaVu_Sans',sans-serif] text-white [background:radial-gradient(circle_at_-9px_245px,transparent_264px,#a5cdf6_272px,transparent_280px)_800px_0/250px_40px_no-repeat,linear-gradient(to_right,#1b5c92_0px,#1f6ea6_50px,#3f9fd2_130px,#45a5d6_520px,#3288c4_690px,#2a84c8_760px,#2273bd_880px,#1f69b5_1060px,#1c5ea8_1090px,#184680_1120px,#15335f_1366px)]">
    <button aria-label="Start" className="grid w-[54px] place-items-center"><StartOrb /></button>
    <div className="flex gap-1 py-px pl-1.5">
      {apps.map((a) => (
        <button key={a.label} aria-label={a.label} className={`grid w-[58px] place-items-center rounded-xs border ${appStyles[a.kind]}`}>
          {a.icon}
        </button>
      ))}
    </div>
    <div className="ml-auto flex items-center text-xs">
      <span className="mr-4 pb-1">FA</span>
      <svg viewBox="0 0 8 4" className="mr-3 h-1 w-2"><path d="M0 4 4 0l4 4Z" fill="#fff" /></svg>
      <svg viewBox="0 0 16 16" className="mr-2 size-4">
        <path d="M1.500 1v14M2 2c4-1 6 2 11 0v7c-5 2-7-1-11 0Z" fill="#fff" stroke="#fff" />
        <circle cx="10.500" cy="11" r="4.500" fill="#d92b20" />
        <path d="m8.500 9 4 4M12.500 9l-4 4" stroke="#fff" strokeWidth="1.500" />
      </svg>
      <svg viewBox="0 0 16 14" className="mr-2 h-3.5 w-4"><path d="M0 11h2v2H0ZM3 10h2v3H3ZM6 8h2v5H6ZM9 5h2v8H9ZM12 2h3v11h-3Z" fill="#fff" /></svg>
      <svg viewBox="0 0 16 16" className="mr-2 size-4" fill="none" stroke="#fff">
        <path d="M1 5.500h3L8 1.500v13l-4-4H1Z" fill="#fff" />
        <path d="M10 6c.8 1.200.8 2.800 0 4M12 4.500c1.500 2 1.500 5 0 7M14 3c2.200 3 2.200 7 0 10" />
      </svg>
      <svg viewBox="0 0 16 16" className="size-4" fill="none" stroke="#fff" strokeWidth="1.500">
        <path d="M7 2H2v12h7v-3M4 1h3" />
        <path d="M7 5h7v3c0 2-1.500 3-3 3s-3-1-3-3ZM9 2v3M13 2v3M11 11c0 2 0 3-1 4" fill="#fff" />
      </svg>
      <time className="mr-1 ml-2.5 w-[66px] text-center leading-[17px]">
        4:27 PM
        <br />
        6/17/2022
      </time>
      <button aria-label="Show desktop" className="h-full w-3.5 border border-[#8fa9c4] bg-linear-to-b from-[#6f8cab] via-[#1d3d68] to-[#2d5486]" />
    </div>
  </footer>
);

export default function App() {
  return (
    <div className="flex h-screen min-h-[700px] flex-col overflow-hidden bg-[#404547] font-[Roboto,'DejaVu_Sans',sans-serif]">
      <div className="shrink-0 font-['Open_Sans','DejaVu_Sans',sans-serif]">
        <TabStrip />
        <AddressBar />
        <BookmarksBar />
      </div>
      <div className="flex min-h-0 flex-1 flex-col">
        <MeetingHeader />
        <Tools />
        <main className="flex min-h-0 flex-1 gap-2.5 px-2.5">
          <Stage />
          <aside className="flex w-[336px] shrink-0 flex-col gap-2.5">
            <Users />
            <Chat />
          </aside>
        </main>
        <p dir="rtl" className="flex h-8 shrink-0 items-center justify-end px-2.5 text-[13px] text-[#e0dfe5]">™اسکای‌روم ©</p>
      </div>
      <Taskbar />
    </div>
  );
}
